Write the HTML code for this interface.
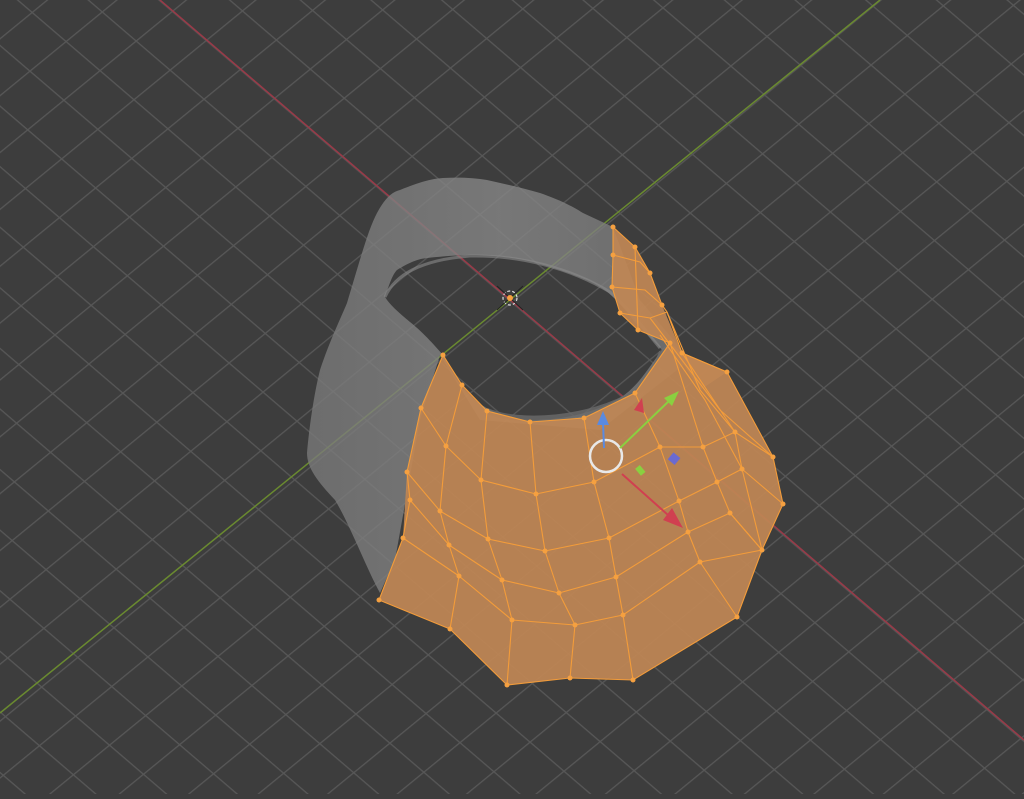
<!DOCTYPE html>
<html><head><meta charset="utf-8"><style>html,body{margin:0;padding:0;background:#3d3d3d;overflow:hidden}</style></head>
<body>
<svg width="1024" height="794" viewBox="0 0 1024 794" xmlns="http://www.w3.org/2000/svg">
<defs>
<pattern id="p1" width="2000" height="46" patternUnits="userSpaceOnUse" patternTransform="translate(160,0) rotate(40.6)">
<rect width="2000" height="1.3" fill="#575757"/></pattern>
<pattern id="p2" width="2000" height="44" patternUnits="userSpaceOnUse" patternTransform="translate(880,0) rotate(-39.3)">
<rect width="2000" height="1.3" fill="#575757"/></pattern>
<linearGradient id="gb" x1="0" y1="0" x2="1" y2="0"><stop offset="0" stop-color="#7a7a7a"/><stop offset="0.5" stop-color="#888"/><stop offset="1" stop-color="#777"/></linearGradient>
</defs>
<rect width="1024" height="794" fill="#3d3d3d"/>
<rect width="1024" height="794" fill="url(#p1)"/>
<rect width="1024" height="794" fill="url(#p2)"/>
<line x1="160" y1="0" x2="1024" y2="740" stroke="#9a3a48" stroke-width="1.5"/>
<line x1="880" y1="0" x2="0" y2="713" stroke="#6a8a30" stroke-width="1.5"/>
<!-- gray band -->
<path fill-rule="evenodd" fill="url(#gb)" opacity="0.78" d="M307,453 C310,420 315,390 320,370 C330,340 340,320 347,303 C360,260 368,230 377,213 C385,198 392,192 400,190 C420,182 430,179 443,178 C460,177 475,178 487,180 C505,184 522,188 540,193 C560,200 572,206 583,213 L613,227 L640,300 L690,360 L600,430 L480,420 L440,355 L420,420 L395,560 L380,593 C365,565 350,525 335,500 C318,482 307,468 307,453 Z M385,297 C390,282 393,274 397,270 C410,262 418,259 427,258 C445,256 460,255 477,255 C500,256 515,258 533,262 C555,268 570,273 587,280 C598,285 606,290 613,297 C622,306 628,313 633,320 C640,328 645,333 650,337 L662,350 C650,365 640,385 620,398 C590,415 560,420 530,420 C505,418 490,412 475,400 C460,388 450,370 443,355 C430,340 420,330 410,322 C398,312 390,305 385,297 Z"/>
<path d="M385,297 C395,275 420,260 470,256 C520,255 570,268 610,292 C630,310 645,330 660,348" fill="none" stroke="#8a8a8a" stroke-width="3" opacity="0.6"/>
<path d="M487,411 C520,425 590,420 635,393 C648,385 655,370 662,352" fill="none" stroke="#6a6a6a" stroke-width="6" opacity="0.8"/>
<!-- orange patch -->
<path fill="#c08755" opacity="0.92" d="M443,355 L462,385 L487,411 L530,422 L584,418 L635,393 L670,343 L682,353 L727,372 L773,457 L783,504 L762,550 L737,617 L633,680 L570,678 L507,685 L450,629 L379,600 L403,538 L407,472 L421,408 Z"/>
<path fill="#c08755" opacity="0.92" d="M613,227 L635,247 L650,273 L662,305 L682,353 L727,372 L700,390 L670,343 L638,330 L620,313 L612,287 L613,255 Z"/>
<g fill="none" stroke="#f39c3a" stroke-width="1.1" stroke-linejoin="round">
<polyline points="443,355 462,385 487,411 530,422 584,418 635,393 670,343"/>
<polyline points="421,408 446,446 481,480 536,494 594,482 660,447 703,447 735,432 773,457"/>
<polyline points="407,472 440,511 488,539 545,551 609,538 679,501 717,482 742,469 783,504"/>
<polyline points="410,500 449,545 502,580 559,593 616,577 688,532 730,513 762,550"/>
<polyline points="403,538 459,576 512,620 575,625 623,615 700,562 762,550"/>
<polyline points="379,600 450,629 507,685 570,678 633,680 737,617 762,550 783,504 773,457 727,372 682,353"/>
<polyline points="443,355 421,408 407,472 410,500 403,538 379,600"/>
<polyline points="462,385 446,446 440,511 449,545 459,576 450,629"/>
<polyline points="487,411 481,480 488,539 502,580 512,620 507,685"/>
<polyline points="530,422 536,494 545,551 559,593 575,625 570,678"/>
<polyline points="584,418 594,482 609,538 616,577 623,615 633,680"/>
<polyline points="635,393 660,447 679,501 688,532 700,562 737,617"/>
<polyline points="670,343 703,447 717,482 730,513 762,550"/>
<polyline points="682,353 735,432 742,469 762,550"/>
<polyline points="613,227 635,247 650,273 662,305 667,312 682,353 727,372"/>
<polyline points="613,227 613,255 612,287 620,313 638,330 670,343"/>
<polyline points="613,255 640,262 650,273"/>
<polyline points="612,287 645,290 662,305"/>
<polyline points="620,313 650,318 667,312"/>
<polyline points="635,247 638,330"/>
<polyline points="667,312 700,390 735,432"/>
<polyline points="660,335 705,400 742,469"/>
<polyline points="650,318 720,410 773,457"/>
</g>
<g fill="#f5a040">
<circle cx="443" cy="355" r="2.5"/><circle cx="462" cy="385" r="2.5"/><circle cx="487" cy="411" r="2.5"/><circle cx="530" cy="422" r="2.5"/><circle cx="584" cy="418" r="2.5"/><circle cx="635" cy="393" r="2.5"/><circle cx="670" cy="343" r="2.5"/>
<circle cx="421" cy="408" r="2.5"/><circle cx="446" cy="446" r="2.5"/><circle cx="481" cy="480" r="2.5"/><circle cx="536" cy="494" r="2.5"/><circle cx="594" cy="482" r="2.5"/><circle cx="660" cy="447" r="2.5"/><circle cx="703" cy="447" r="2.5"/><circle cx="735" cy="432" r="2.5"/><circle cx="773" cy="457" r="2.5"/>
<circle cx="407" cy="472" r="2.5"/><circle cx="440" cy="511" r="2.5"/><circle cx="488" cy="539" r="2.5"/><circle cx="545" cy="551" r="2.5"/><circle cx="609" cy="538" r="2.5"/><circle cx="679" cy="501" r="2.5"/><circle cx="717" cy="482" r="2.5"/><circle cx="742" cy="469" r="2.5"/><circle cx="783" cy="504" r="2.5"/>
<circle cx="410" cy="500" r="2.5"/><circle cx="449" cy="545" r="2.5"/><circle cx="502" cy="580" r="2.5"/><circle cx="559" cy="593" r="2.5"/><circle cx="616" cy="577" r="2.5"/><circle cx="688" cy="532" r="2.5"/><circle cx="730" cy="513" r="2.5"/><circle cx="762" cy="550" r="2.5"/>
<circle cx="403" cy="538" r="2.5"/><circle cx="459" cy="576" r="2.5"/><circle cx="512" cy="620" r="2.5"/><circle cx="575" cy="625" r="2.5"/><circle cx="623" cy="615" r="2.5"/><circle cx="700" cy="562" r="2.5"/>
<circle cx="379" cy="600" r="2.5"/><circle cx="450" cy="629" r="2.5"/><circle cx="507" cy="685" r="2.5"/><circle cx="570" cy="678" r="2.5"/><circle cx="633" cy="680" r="2.5"/><circle cx="737" cy="617" r="2.5"/><circle cx="727" cy="372" r="2.5"/><circle cx="682" cy="353" r="2.5"/>
<circle cx="613" cy="227" r="2.5"/><circle cx="635" cy="247" r="2.5"/><circle cx="650" cy="273" r="2.5"/><circle cx="662" cy="305" r="2.5"/><circle cx="613" cy="255" r="2.5"/><circle cx="612" cy="287" r="2.5"/><circle cx="620" cy="313" r="2.5"/><circle cx="638" cy="330" r="2.5"/>
</g>
<!-- gizmo -->
<circle cx="510" cy="298" r="7" fill="none" stroke="#ddd" stroke-width="1.2" stroke-dasharray="3,2"/>
<line x1="497" y1="286" x2="523" y2="310" stroke="#222" stroke-width="1"/><line x1="523" y1="286" x2="497" y2="310" stroke="#222" stroke-width="1"/>
<circle cx="510" cy="298" r="3" fill="#f5a040"/>
<circle cx="606" cy="456" r="16" fill="none" stroke="#e8e8e8" stroke-width="2.5"/>
<line x1="604" y1="448" x2="603" y2="422" stroke="#5a8ae0" stroke-width="2"/><polygon points="597,425 603,411 609,425" fill="#5a8ae0"/>
<line x1="620" y1="448" x2="670" y2="400" stroke="#8ad040" stroke-width="2"/><polygon points="664,398 679,391 672,406" fill="#8ad040"/>
<line x1="622" y1="474" x2="668" y2="515" stroke="#d04050" stroke-width="2"/><polygon points="663,520 683,528 672,508" fill="#d04050"/>
<rect x="670" y="454" width="9" height="9" fill="#6a6ad0" transform="rotate(40 674 458)"/>
<rect x="637" y="466" width="6" height="9" fill="#8ad040" transform="rotate(-40 640 470)"/>
<polygon points="634,410 642,398 644,413" fill="#d04050"/>
</svg>
</body></html>
